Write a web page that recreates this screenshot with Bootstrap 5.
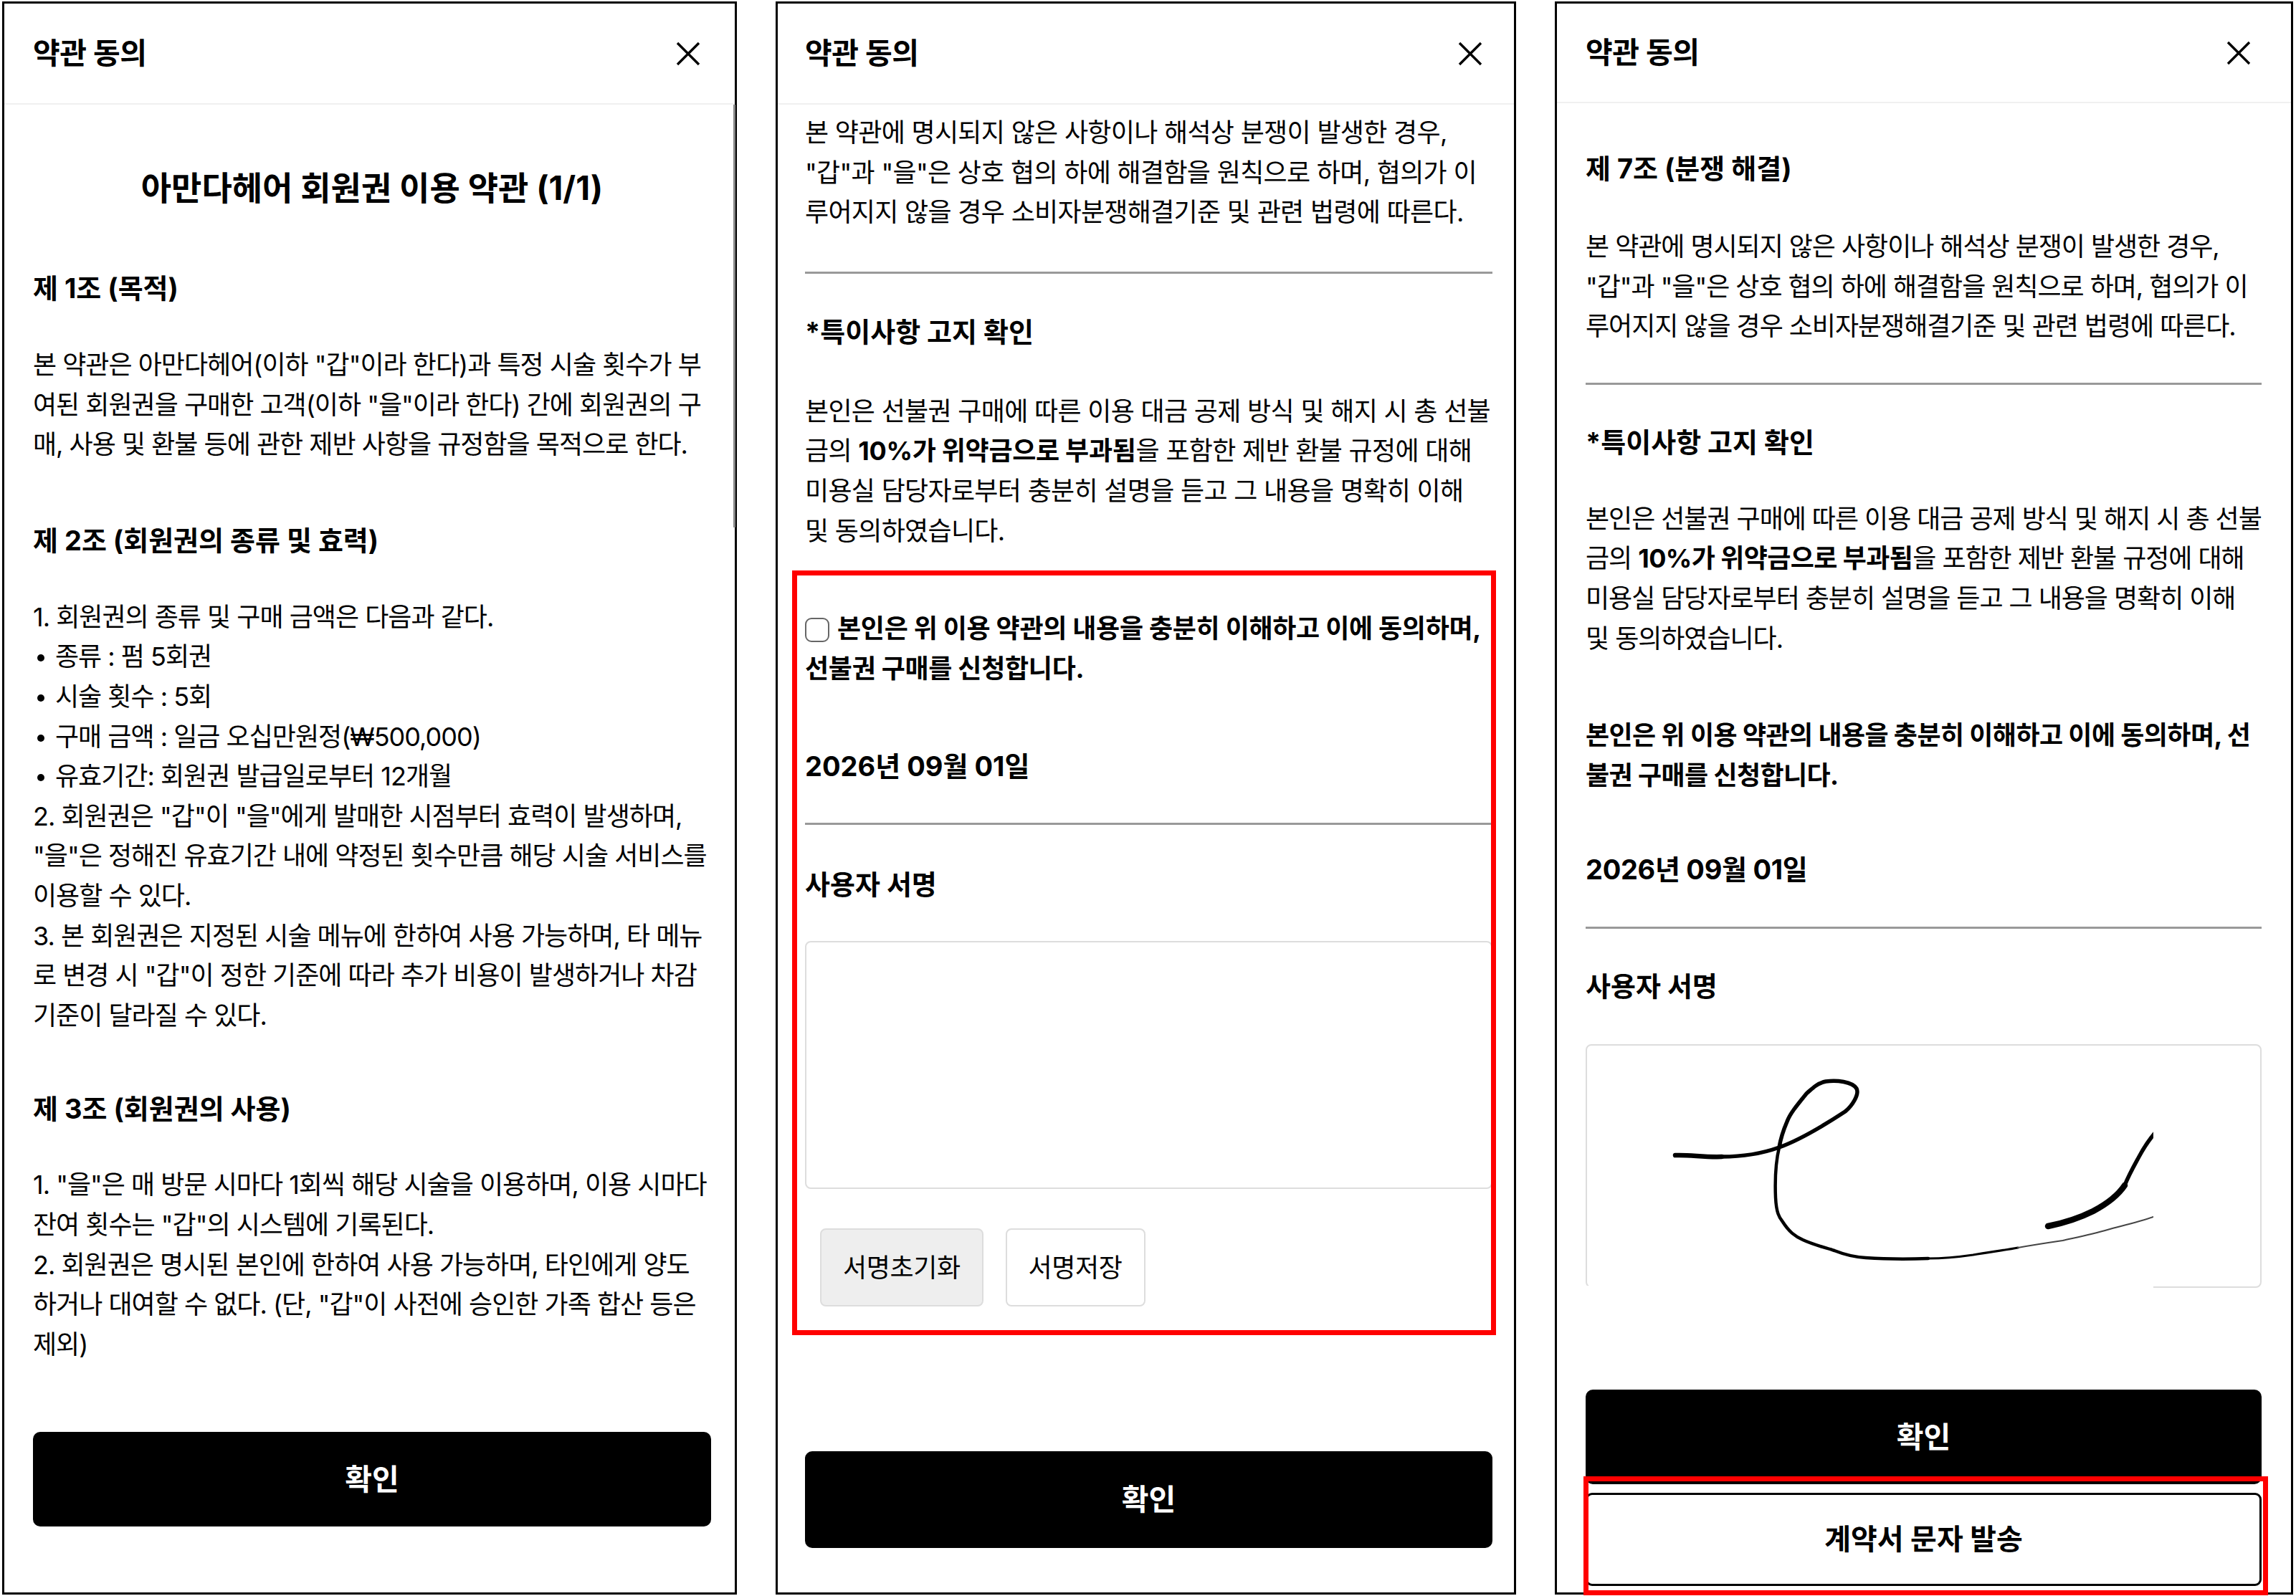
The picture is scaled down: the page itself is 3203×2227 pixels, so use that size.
<!DOCTYPE html>
<html lang="ko">
<head>
<meta charset="utf-8">
<title>약관 동의</title>
<link href="https://cdn.jsdelivr.net/npm/bootstrap@5.3.0/dist/css/bootstrap.min.css" rel="stylesheet">
<style>
html,body{height:100%;}
body{background:#fff;color:#000;font-family:"Inter","Noto Sans CJK KR",sans-serif;font-size:36px;line-height:55.6px;overflow:hidden;padding:2px 0 0 3px;}
.shots{gap:54px;height:2223px;}
.phone{border:3px solid #000;height:2223px;position:relative;background:#fff;flex:none;}
.phone-a{width:1025px;letter-spacing:-1px;}
.phone-b{width:1033px;letter-spacing:-.7px;}
.phone-c{width:1030px;letter-spacing:-1.05px;}
.topbar{border-bottom:2px solid #f0f0f0;font-size:41px;font-weight:700;flex:none;letter-spacing:-.4px;}
.phone-a .topbar{height:141px;padding:0 48px 0 40px;}
.phone-b .topbar{height:141px;padding:0 44px 0 38px;}
.phone-c .topbar{height:139px;padding:0 56px 0 40px;}
.xbtn{background:none;border:0;padding:0;line-height:0;}
.xbtn svg{width:34px;height:34px;display:block;}
.pane{flex:1 1 auto;min-height:0;}
.phone-a .pane{padding:0 33px 0 40px;}
.phone-b .pane{padding:0 30px 0 38px;}
.phone-c .pane{padding:0 41px 0 40px;}
.scrollmark{position:absolute;right:-1px;top:141px;width:3px;height:590px;background:#888;}
.doc-title{font-size:46px;font-weight:700;line-height:60px;text-align:center;margin:86px 0 0;letter-spacing:0;}
.sec-h{font-size:38px;font-weight:700;line-height:56px;margin:0;letter-spacing:0;}
.phone-c .date-h{letter-spacing:-.3px;}
.txt{margin:0;}
.rule{border:0;border-top:3px solid #999;opacity:1;margin:0;}
.bullet{padding-left:31px;position:relative;}
.bullet::before{content:"";position:absolute;left:6px;top:24px;width:10px;height:10px;border-radius:50%;background:#000;}
.sign-box{border:2px solid #ddd;border-radius:8px;position:relative;background:#fff;}
.sign-b{height:346px;}
.sign-c{height:340px;}
.sign-art{position:absolute;left:-2px;top:-2px;width:792px;height:343px;}
.sign-art path{fill:none;stroke:#000;stroke-linecap:round;stroke-linejoin:round;}
.sign-art .tail{stroke:#444;}
.sub-btn{font-size:36px;line-height:40px;height:109px;padding:0 30px;border:2px solid #ddd;border-radius:8px;background:#fff;color:#000;letter-spacing:-.4px;}
.sub-btn:hover{background:#fff;border-color:#ddd;color:#000;}
.sub-btn.shade,.sub-btn.shade:hover{background:#eee;}
.sub-row{gap:31px;padding-left:21px;}
.go-btn{background:#000;border:0;border-radius:10px;color:#fff;font-size:41px;font-weight:700;letter-spacing:0;}
.go-btn:hover{background:#000;color:#fff;}
.send-btn{background:#fff;border:3px solid #000;border-radius:9px;color:#000;font-size:40px;font-weight:700;height:130px;letter-spacing:0;}
.redmark{position:absolute;border:7px solid #f00;pointer-events:none;}
.red-b{left:-18px;right:-5px;top:-50px;bottom:-40px;}
.red-c{left:-3px;right:-9px;top:-23px;bottom:-13px;}
.tick{width:34px;height:34px;margin:0 11px 0 0!important;border:2px solid #666;border-radius:6px;vertical-align:-6px;float:none;}
.fw-b{font-weight:700;}
.phone-b .fw-b{letter-spacing:-.3px;}
.phone-c .fw-b{letter-spacing:-.6px;}
.g4{margin-top:4px}.g12{margin-top:12px}.g50{margin-top:50px}.g51{margin-top:51px}.g52{margin-top:52px}.g53{margin-top:53px}.g54{margin-top:54px}.g55{margin-top:55px}.g56{margin-top:56px}.g63{margin-top:63px}.g74{margin-top:74px}.g75{margin-top:75px}.g77{margin-top:77px}.g78{margin-top:78px}.g80{margin-top:80px}.g82{margin-top:82px}.g94{margin-top:94px}.g142{margin-top:142px}.g202{margin-top:202px}
.h132{height:132px}.h135{height:135px}
.relbox{position:relative;display:flow-root;}
</style>
</head>
<body>
<div class="d-flex shots">

<section class="phone phone-a d-flex flex-column">
  <div class="topbar d-flex align-items-center justify-content-between">
    <span>약관 동의</span>
    <button class="xbtn" type="button" aria-label="닫기"><svg viewBox="0 0 34 34"><path d="M2 2 32 32M32 2 2 32" stroke="#000" stroke-width="3.4" fill="none"/></svg></button>
  </div>
  <span class="scrollmark"></span>
  <div class="pane">
    <h1 class="doc-title">아만다헤어 회원권 이용 약관 (1/1)</h1>
    <h2 class="sec-h g82">제 1조 (목적)</h2>
    <p class="txt g52">본 약관은 아만다헤어(이하 "갑"이라 한다)과 특정 시술 횟수가 부여된 회원권을 구매한 고객(이하 "을"이라 한다) 간에 회원권의 구매, 사용 및 환불 등에 관한 제반 사항을 규정함을 목적으로 한다.</p>
    <h2 class="sec-h g77">제 2조 (회원권의 종류 및 효력)</h2>
    <div class="g52">
      <p class="txt">1. 회원권의 종류 및 구매 금액은 다음과 같다.</p>
      <p class="txt bullet">종류 : 펌 5회권</p>
      <p class="txt bullet">시술 횟수 : 5회</p>
      <p class="txt bullet">구매 금액 : 일금 오십만원정(₩500,000)</p>
      <p class="txt bullet">유효기간: 회원권 발급일로부터 12개월</p>
      <p class="txt">2. 회원권은 "갑"이 "을"에게 발매한 시점부터 효력이 발생하며, "을"은 정해진 유효기간 내에 약정된 횟수만큼 해당 시술 서비스를 이용할 수 있다.</p>
      <p class="txt">3. 본 회원권은 지정된 시술 메뉴에 한하여 사용 가능하며, 타 메뉴로 변경 시 "갑"이 정한 기준에 따라 추가 비용이 발생하거나 차감 기준이 달라질 수 있다.</p>
    </div>
    <h2 class="sec-h g74">제 3조 (회원권의 사용)</h2>
    <div class="g51">
      <p class="txt">1. "을"은 매 방문 시마다 1회씩 해당 시술을 이용하며, 이용 시마다 잔여 횟수는 "갑"의 시스템에 기록된다.</p>
      <p class="txt">2. 회원권은 명시된 본인에 한하여 사용 가능하며, 타인에게 양도하거나 대여할 수 없다. (단, "갑"이 사전에 승인한 가족 합산 등은 제외)</p>
    </div>
    <button class="btn go-btn w-100 h132 g94" type="button">확인</button>
  </div>
</section>

<section class="phone phone-b d-flex flex-column">
  <div class="topbar d-flex align-items-center justify-content-between">
    <span>약관 동의</span>
    <button class="xbtn" type="button" aria-label="닫기"><svg viewBox="0 0 34 34"><path d="M2 2 32 32M32 2 2 32" stroke="#000" stroke-width="3.4" fill="none"/></svg></button>
  </div>
  <div class="pane">
    <p class="txt g12">본 약관에 명시되지 않은 사항이나 해석상 분쟁이 발생한 경우, "갑"과 "을"은 상호 협의 하에 해결함을 원칙으로 하며, 협의가 이루어지지 않을 경우 소비자분쟁해결기준 및 관련 법령에 따른다.</p>
    <hr class="rule g54">
    <h2 class="sec-h g53">*특이사항 고지 확인</h2>
    <p class="txt g56">본인은 선불권 구매에 따른 이용 대금 공제 방식 및 해지 시 총 선불금의 <b class="fw-b">10%가 위약금으로 부과됨</b>을 포함한 제반 환불 규정에 대해 미용실 담당자로부터 충분히 설명을 듣고 그 내용을 명확히 이해<br>및 동의하였습니다.</p>
    <div class="relbox g77">
      <label class="fw-b d-block g4"><input class="form-check-input tick" type="checkbox">본인은 위 이용 약관의 내용을 충분히 이해하고 이에 동의하며, 선불권 구매를 신청합니다.</label>
      <h2 class="sec-h g80">2026년 09월 01일</h2>
      <hr class="rule g51">
      <h2 class="sec-h g55">사용자 서명</h2>
      <div class="sign-box sign-b g51"></div>
      <div class="d-flex sub-row g55">
        <button class="btn sub-btn shade" type="button">서명초기화</button>
        <button class="btn sub-btn" type="button">서명저장</button>
      </div>
      <div class="redmark red-b"></div>
    </div>
    <button class="btn go-btn w-100 h135 g202" type="button">확인</button>
  </div>
</section>

<section class="phone phone-c d-flex flex-column">
  <div class="topbar d-flex align-items-center justify-content-between">
    <span>약관 동의</span>
    <button class="xbtn" type="button" aria-label="닫기"><svg viewBox="0 0 34 34"><path d="M2 2 32 32M32 2 2 32" stroke="#000" stroke-width="3.4" fill="none"/></svg></button>
  </div>
  <div class="pane">
    <h2 class="sec-h g63">제 7조 (분쟁 해결)</h2>
    <p class="txt g54">본 약관에 명시되지 않은 사항이나 해석상 분쟁이 발생한 경우, "갑"과 "을"은 상호 협의 하에 해결함을 원칙으로 하며, 협의가 이루어지지 않을 경우 소비자분쟁해결기준 및 관련 법령에 따른다.</p>
    <hr class="rule g50">
    <h2 class="sec-h g52">*특이사항 고지 확인</h2>
    <p class="txt g52">본인은 선불권 구매에 따른 이용 대금 공제 방식 및 해지 시 총 선불금의 <b class="fw-b">10%가 위약금으로 부과됨</b>을 포함한 제반 환불 규정에 대해 미용실 담당자로부터 충분히 설명을 듣고 그 내용을 명확히 이해 및 동의하였습니다.</p>
    <p class="txt fw-b g80">본인은 위 이용 약관의 내용을 충분히 이해하고 이에 동의하며, 선불권 구매를 신청합니다.</p>
    <h2 class="sec-h date-h g75">2026년 09월 01일</h2>
    <hr class="rule g52">
    <h2 class="sec-h g52">사용자 서명</h2>
    <div class="sign-box sign-c g53">
      <svg class="sign-art" viewBox="0 0 792 343" role="img" aria-label="서명">
        <rect y="337" width="792" height="6" fill="#fff"/>
        <path stroke-width="6.500" d="M125 155C145 154 165 158 190 157"/>
        <path stroke-width="5.500" d="M190 157C220 157 245 153 270 144 295 135 330 115 362 94 372 86 382 70 378 62 372 52 350 50 335 52 322 55 316 62 308 69 295 85 285 97 281 108 275 122 272 132 270 144"/>
        <path stroke-width="4.500" d="M270 144C265 165 264 190 265 214 266 235 270 242 275 248 284 262 292 268 303 273 318 280 335 284 347 288 362 294 375 297 390.500 298 420 300 450 300 478 299"/>
        <path stroke-width="3.200" d="M478 299C500 299 520 297 540.500 294 562 290 582 288 603 284"/>
        <path class="tail" stroke-width="2" d="M603 284C625 280 645 277 665.500 274 688 269 708 265 728 259 750 253 772 248 792 241"/>
        <path stroke-width="8.500" d="M645 254C665 250 688 243 708 233 725 224 742 212 752 197"/>
        <path stroke-width="5.500" d="M752 197C758 182 766 168 772 157 778 146 786 133 796 122"/>
      </svg>
    </div>
    <button class="btn go-btn w-100 h132 g142" type="button">확인</button>
    <div class="relbox g12">
      <button class="btn send-btn w-100" type="button">계약서 문자 발송</button>
      <div class="redmark red-c"></div>
    </div>
  </div>
</section>

</div>
<script src="https://cdn.jsdelivr.net/npm/bootstrap@5.3.0/dist/js/bootstrap.bundle.min.js"></script>
</body>
</html>
